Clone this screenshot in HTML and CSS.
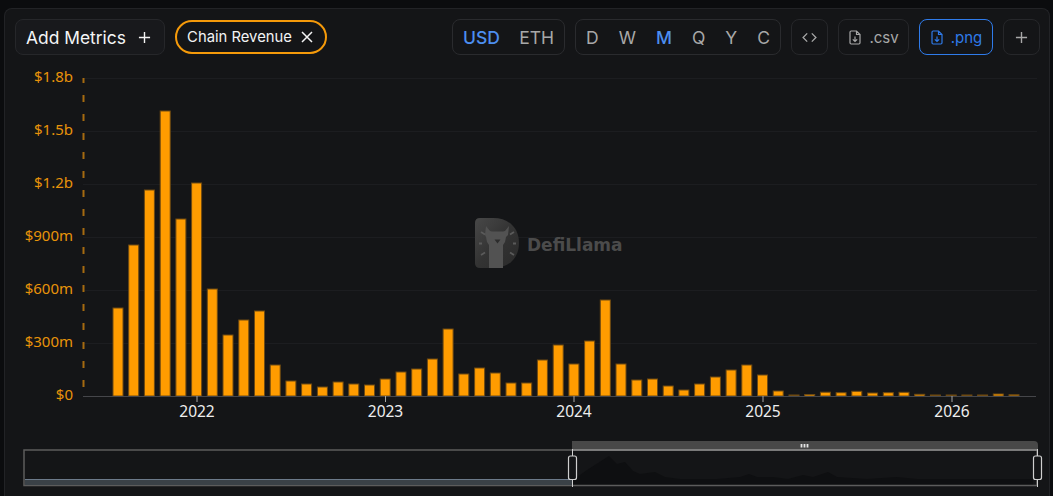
FILE: index.html
```html
<!DOCTYPE html>
<html lang="en">
<head>
<meta charset="utf-8">
<title>Chain Revenue</title>
<link rel="stylesheet" href="styles.css">
</head>
<body>
<main class="panel">
  <header class="toolbar">
    <button class="btn add">Add Metrics
      <svg class="ico-plus" viewBox="0 0 14 14"><path d="M7 1v12M1 7h12"/></svg>
    </button>
    <button class="pill">Chain Revenue
      <svg class="ico-x" viewBox="0 0 12 12"><path d="M1 1l10 10M11 1L1 11"/></svg>
    </button>
    <div class="spacer"></div>
    <div class="group currency">
      <span class="opt active">USD</span>
      <span class="opt">ETH</span>
    </div>
    <div class="group period">
      <span class="opt">D</span>
      <span class="opt">W</span>
      <span class="opt active">M</span>
      <span class="opt">Q</span>
      <span class="opt">Y</span>
      <span class="opt">C</span>
    </div>
    <button class="btn icon">
      <svg class="ico-code" viewBox="0 0 16 12"><path d="M5.500 1.500L1 6l4.500 4.500M10.500 1.500L15 6l-4.500 4.500"/></svg>
    </button>
    <button class="btn file">
      <svg class="ico-file" viewBox="0 0 12 15"><path d="M7.500 1H2.200C1.500 1 1 1.500 1 2.200v10.600c0 .7.5 1.200 1.200 1.200h7.600c.7 0 1.200-.5 1.200-1.200V4.500L7.500 1zM7.500 1v3.500H11M6 6.500v5M3.800 9.300L6 11.500l2.200-2.200"/></svg>
      .csv
    </button>
    <button class="btn file selected">
      <svg class="ico-file" viewBox="0 0 12 15"><path d="M7.500 1H2.200C1.500 1 1 1.500 1 2.200v10.600c0 .7.5 1.200 1.200 1.200h7.600c.7 0 1.200-.5 1.200-1.200V4.500L7.500 1zM7.500 1v3.500H11M6 6.500v5M3.800 9.300L6 11.500l2.200-2.200"/></svg>
      .png
    </button>
    <button class="btn icon">
      <svg class="ico-plus small" viewBox="0 0 14 14"><path d="M7 1v12M1 7h12"/></svg>
    </button>
  </header>

  <svg class="chart" viewBox="5 56 1045 440" width="1045" height="440">
    <defs>
      <linearGradient id="wm-fade" x1="0" y1="0" x2="1" y2="1">
        <stop offset="0" stop-color="#484848"/>
        <stop offset="0.5" stop-color="#333333"/>
        <stop offset="1" stop-color="#2a2a2a"/>
      </linearGradient>
    </defs>
    <g class="grid">
      <path d="M83 78.500H1037M83 131.500H1037M83 184.500H1037M83 237.500H1037M83 290.500H1037M83 343.500H1037"/>
    </g>

    <g class="watermark">
      <path class="wm-shape" d="M475 223q0-5 5-5h13c17 0 26 11 26 25s-9 25-26 25h-13q-5 0-5-5z"/>
      <path class="wm-llama" d="M486 226l4 5 2 .5h11l2-.5 4-5-1 9-2 2-1 5-2 3v23h-14v-23l-2-3-1-5-1-2z"/>
      <path class="wm-nose" d="M494.500 239.500h6l-3 4z"/>
      <path class="wm-rays" d="M481 232l4 2.500M479 243.500h3M481 255l4-2.500M514 232l-4 2.500M516 243.500h-3M514 255l-4-2.500"/>
      <text class="wm-text" x="527" y="250.500">DefiLlama</text>
    </g>

    <path class="y-axis" d="M83.500 78V396"/>
    <g class="y-labels">
      <text x="73" y="82">$1.8b</text>
      <text x="73" y="135">$1.5b</text>
      <text x="73" y="188">$1.2b</text>
      <text x="73" y="241">$900m</text>
      <text x="73" y="294">$600m</text>
      <text x="73" y="347">$300m</text>
      <text x="73" y="400">$0</text>
    </g>

    <g class="bars">
      <rect x="113" y="308" width="10" height="88"/>
      <rect x="128.700" y="245" width="10" height="151"/>
      <rect x="144.400" y="190" width="10" height="206"/>
      <rect x="160.200" y="111" width="10" height="285"/>
      <rect x="175.900" y="219" width="10" height="177"/>
      <rect x="191.600" y="183" width="10" height="213"/>
      <rect x="207.300" y="289" width="10" height="107"/>
      <rect x="223" y="335" width="10" height="61"/>
      <rect x="238.800" y="320" width="10" height="76"/>
      <rect x="254.500" y="311" width="10" height="85"/>
      <rect x="270.200" y="365" width="10" height="31"/>
      <rect x="285.900" y="381" width="10" height="15"/>
      <rect x="301.600" y="384" width="10" height="12"/>
      <rect x="317.400" y="387" width="10" height="9"/>
      <rect x="333.100" y="382" width="10" height="14"/>
      <rect x="348.800" y="384" width="10" height="12"/>
      <rect x="364.500" y="385" width="10" height="11"/>
      <rect x="380.200" y="379" width="10" height="17"/>
      <rect x="396" y="372" width="10" height="24"/>
      <rect x="411.700" y="369" width="10" height="27"/>
      <rect x="427.400" y="359" width="10" height="37"/>
      <rect x="443.100" y="329" width="10" height="67"/>
      <rect x="458.800" y="374" width="10" height="22"/>
      <rect x="474.600" y="368" width="10" height="28"/>
      <rect x="490.300" y="373" width="10" height="23"/>
      <rect x="506" y="383" width="10" height="13"/>
      <rect x="521.700" y="383" width="10" height="13"/>
      <rect x="537.400" y="360" width="10" height="36"/>
      <rect x="553.200" y="345" width="10" height="51"/>
      <rect x="568.900" y="364" width="10" height="32"/>
      <rect x="584.600" y="341" width="10" height="55"/>
      <rect x="600.300" y="300" width="10" height="96"/>
      <rect x="616" y="364" width="10" height="32"/>
      <rect x="631.800" y="380" width="10" height="16"/>
      <rect x="647.500" y="379" width="10" height="17"/>
      <rect x="663.200" y="386" width="10" height="10"/>
      <rect x="678.900" y="390" width="10" height="6"/>
      <rect x="694.600" y="384" width="10" height="12"/>
      <rect x="710.400" y="377" width="10" height="19"/>
      <rect x="726.100" y="370" width="10" height="26"/>
      <rect x="741.800" y="365" width="10" height="31"/>
      <rect x="757.500" y="375" width="10" height="21"/>
      <rect x="773.200" y="391" width="10" height="5"/>
      <rect x="789" y="395" width="10" height="1"/>
      <rect x="804.700" y="394.500" width="10" height="1.500"/>
      <rect x="820.400" y="392.200" width="10" height="3.800"/>
      <rect x="836.100" y="392.700" width="10" height="3.300"/>
      <rect x="851.800" y="391.300" width="10" height="4.700"/>
      <rect x="867.600" y="393" width="10" height="3"/>
      <rect x="883.300" y="392.700" width="10" height="3.300"/>
      <rect x="899" y="392.300" width="10" height="3.700"/>
      <rect x="914.700" y="394.300" width="10" height="1.700"/>
      <rect class="faint" x="930.400" y="395" width="10" height="1"/>
      <rect class="faint" x="946.200" y="395" width="10" height="1"/>
      <rect class="faint" x="961.900" y="395" width="10" height="1"/>
      <rect class="faint" x="977.600" y="395" width="10" height="1"/>
      <rect x="993.300" y="394" width="10" height="2"/>
      <rect x="1009" y="394.800" width="10" height="1.200"/>
    </g>

    <path class="x-axis" d="M83 396.500H1036"/>
    <path class="ticks" d="M197 396V402M385.500 396V402M574 396V402M763 396V402M952 396V402"/>
    <g class="x-labels">
      <text x="197" y="417">2022</text>
      <text x="385.500" y="417">2023</text>
      <text x="574" y="417">2024</text>
      <text x="763" y="417">2025</text>
      <text x="952" y="417">2026</text>
    </g>

    <g class="slider">
      <path class="sl-handle-bar" d="M572 441H1034q4 0 4 4v5H572z"/>
      <path class="sl-grip" d="M801.500 444v3.500M804.500 444v3.500M807.500 444v3.500"/>
      <path class="sl-spark" d="M573 485V480L587 470L609 456L617 464L625 462L633 471L640 474L655 472L665 477L680 479L717 479L740 477L749 474L757 477L773 477L788 479L803 475L813 477L828 472L837 477L867 479L897 477L917 479L1033 479V485z"/>
      <rect class="sl-frame" x="24" y="450" width="1013" height="35.500"/>
      <rect class="sl-fill" x="25" y="480" width="547" height="5"/>
      <path class="sl-fill-line" d="M25 479.500H572"/>
      <path class="sl-top" d="M572 450H1037"/>
      <path class="sl-line" d="M572.500 449V487M1037.500 449V487"/>
      <rect class="sl-handle" x="568.500" y="456" width="8" height="23.500" rx="2"/>
      <rect class="sl-handle" x="1033.500" y="456" width="8" height="23.500" rx="2"/>
    </g>
  </svg>
</main>
</body>
</html>
```

FILE: styles.css
```css
* { box-sizing: border-box; }

html, body {
  margin: 0;
  height: 100%;
  overflow: hidden;
  background: #0b0c0e;
}

body {
  padding: 8px 3px 0 4px;
  font-family: Inter, "Liberation Sans", sans-serif;
}

.panel {
  background: #141517;
  border: 1px solid #222326;
  border-bottom: 0;
  border-radius: 8px 8px 0 0;
  height: 488px;
}

.toolbar {
  display: flex;
  align-items: center;
  gap: 10px;
  padding: 10px 9px 1px 10px;
  height: 47px;
}

.spacer { flex: 1; }

.btn {
  display: inline-flex;
  align-items: center;
  justify-content: center;
  height: 36px;
  background: transparent;
  border: 1px solid #26272a;
  border-radius: 8px;
  font-family: inherit;
  color: #a8a8a8;
  padding: 0;
}

.add {
  width: 150px;
  gap: 12px;
  padding-right: 3px;
  font-size: 17.400px;
  color: #f4f5f6;
  background: #18191c;
}

.ico-plus {
  width: 13px;
  height: 13px;
  fill: none;
  stroke: #f4f4f4;
  stroke-width: 1.500;
}

.ico-plus.small { stroke: #a8a8a8; }

.pill {
  display: inline-flex;
  align-items: center;
  gap: 9px;
  width: 152px;
  height: 34px;
  justify-content: center;
  background: transparent;
  border: 2px solid #f59a0a;
  border-radius: 17px;
  font-family: inherit;
  font-size: 14.800px;
  color: #f2f3f4;
  padding: 0 2px 0 0;
}

.ico-x {
  width: 12px;
  height: 12px;
  fill: none;
  stroke: #f4f4f4;
  stroke-width: 1.500;
}

.group {
  display: flex;
  align-items: center;
  justify-content: space-between;
  height: 36px;
  border: 1px solid #2a2b2e;
  border-radius: 8px;
  font-size: 17.500px;
  color: #a8a8a8;
}

.currency { width: 113px; padding: 0 10px; }
.period { width: 206px; padding: 0 10px; }

.opt { display: block; }
.opt.active { color: #4c8eef; font-weight: 500; }

.icon { width: 37px; }

.file {
  width: 71px;
  gap: 8px;
  padding-left: 1px;
  font-size: 15px;
}

.file.selected {
  width: 74px;
  color: #2f7bea;
  border-color: #2f7bea;
}

.ico-code {
  width: 15px;
  height: 11px;
  fill: none;
  stroke: #a8a8a8;
  stroke-width: 1.400;
}

.ico-file {
  width: 12px;
  height: 15px;
  fill: none;
  stroke: currentColor;
  stroke-width: 1.200;
}

.chart { display: block; }

.grid path { stroke: #1c1d20; fill: none; }

.y-axis {
  stroke: #a56b10;
  stroke-width: 2;
  stroke-dasharray: 7 12;
  stroke-dashoffset: 2;
  fill: none;
}

.y-labels text {
  font-family: "Noto Sans", "Open Sans", sans-serif;
  font-size: 15px;
  text-anchor: end;
  fill: #e8930a;
}

.bars rect {
  fill: #ff9c00;
  stroke: #6e4a12;
  stroke-width: 1;
}

.bars .faint { fill: #6e4a12; }

.x-axis { stroke: #45464a; fill: none; }
.ticks { stroke: #a8a8a8; fill: none; }

.x-labels text {
  font-family: "Noto Sans", "Open Sans", sans-serif;
  font-size: 15.500px;
  text-anchor: middle;
  fill: #eeeeee;
}

.wm-shape { fill: url(#wm-fade); }
.wm-llama { fill: #525252; }
.wm-nose { fill: #2c2c2c; }
.wm-rays { stroke: #5a5a5a; stroke-width: 1.800; fill: none; }
.wm-text {
  font-family: "DejaVu Sans", sans-serif;
  font-weight: 700;
  font-size: 17px;
  fill: #4b4b4b;
}

.sl-handle-bar { fill: #484848; }
.sl-grip { stroke: #e4e4e4; stroke-width: 1.800; fill: none; }
.sl-spark { fill: #0e0f11; }
.sl-frame { fill: none; stroke: #5c5c5c; stroke-width: 1.500; }
.sl-fill { fill: #3a4147; }
.sl-fill-line { stroke: #6c7a8a; fill: none; }
.sl-top { stroke: #8a8a8a; stroke-width: 1.500; fill: none; }
.sl-line { stroke: #cfcfcf; fill: none; }
.sl-handle { fill: #141517; stroke: #cfcfcf; stroke-width: 1.200; }
```
